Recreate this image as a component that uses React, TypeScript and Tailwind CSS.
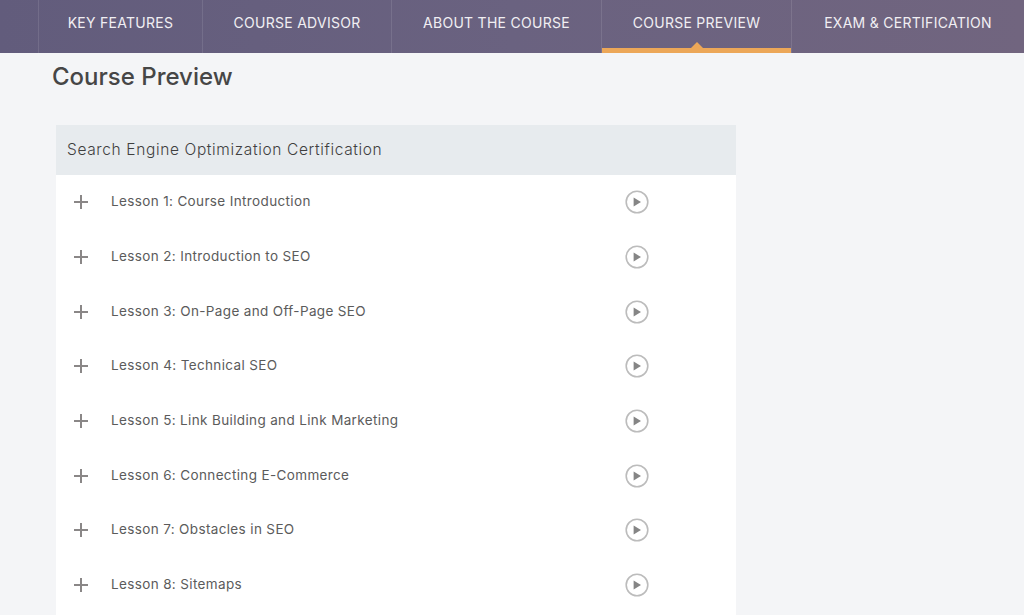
const TABS = [
  { label: "KEY FEATURES", width: "w-[164px]" },
  { label: "COURSE ADVISOR", width: "w-[189px]" },
  { label: "ABOUT THE COURSE", width: "w-[210px]" },
  { label: "COURSE PREVIEW", width: "w-[190px]", active: true },
  { label: "EXAM & CERTIFICATION", width: "flex-1" },
];

const LESSONS = [
  "Lesson 1: Course Introduction",
  "Lesson 2: Introduction to SEO",
  "Lesson 3: On-Page and Off-Page SEO",
  "Lesson 4: Technical SEO",
  "Lesson 5: Link Building and Link Marketing",
  "Lesson 6: Connecting E-Commerce",
  "Lesson 7: Obstacles in SEO",
  "Lesson 8: Sitemaps",
];

function PlusIcon() {
  return (
    <svg width="14" height="14" viewBox="0 0 14 14" className="shrink-0">
      <path d="M7 0v14M0 7h14" stroke="#8a8787" strokeWidth="2" fill="none" />
    </svg>
  );
}

function PlayIcon() {
  return (
    <svg width="24" height="24" viewBox="0 0 24 24">
      <circle cx="12" cy="12" r="10.8" stroke="#bcbcbc" strokeWidth="1.6" fill="#fff" />
      <path d="M8.6 7.6v8.8l7.4-4.4z" fill="#858585" />
    </svg>
  );
}

export default function App() {
  return (
    <div className="h-[615px] w-[1024px] overflow-hidden bg-[#f4f5f7] font-['Inter','Liberation_Sans',sans-serif]">
      {/* Nav */}
      <div className="flex h-[53px] bg-gradient-to-r from-[#625c7c] via-[#6a6280] to-[#71657f] pl-[38px]">
        {TABS.map((tab) => (
          <div
            key={tab.label}
            className={`relative flex items-center justify-center border-l border-white/10 pb-[8px] text-[14px] tracking-[0.28px] text-[#f1eff3] ${tab.width}`}
          >
            {tab.label}
            {tab.active && (
              <>
                <span className="absolute inset-x-0 bottom-0 h-[5px] bg-[#eca758]" />
                <span className="absolute bottom-[4px] left-1/2 h-0 w-0 -translate-x-1/2 border-x-[7px] border-b-[7px] border-x-transparent border-b-[#eca758]" />
              </>
            )}
          </div>
        ))}
      </div>

      <h1 className="ml-[52px] mt-[9px] text-[24px] leading-[30px] font-medium text-[#464646]">
        Course Preview
      </h1>

      {/* Accordion */}
      <div className="ml-[56px] mt-[33px] h-[500px] w-[680px] bg-white">
        <div className="flex h-[50px] items-center bg-[#e7ebee] px-[11px] text-[15.5px] tracking-[0.63px] font-light text-[#3f3f3f]">
          Search Engine Optimization Certification
        </div>
        {LESSONS.map((lesson) => (
          <div key={lesson} className="flex h-[54.7px] items-center pl-[18px]">
            <PlusIcon />
            <span className="ml-[23px] w-[514px] -translate-y-[0.6px] text-[13.5px] tracking-[0.36px] text-[#5b5b5b]">
              {lesson}
            </span>
            <PlayIcon />
          </div>
        ))}
      </div>
    </div>
  );
}
